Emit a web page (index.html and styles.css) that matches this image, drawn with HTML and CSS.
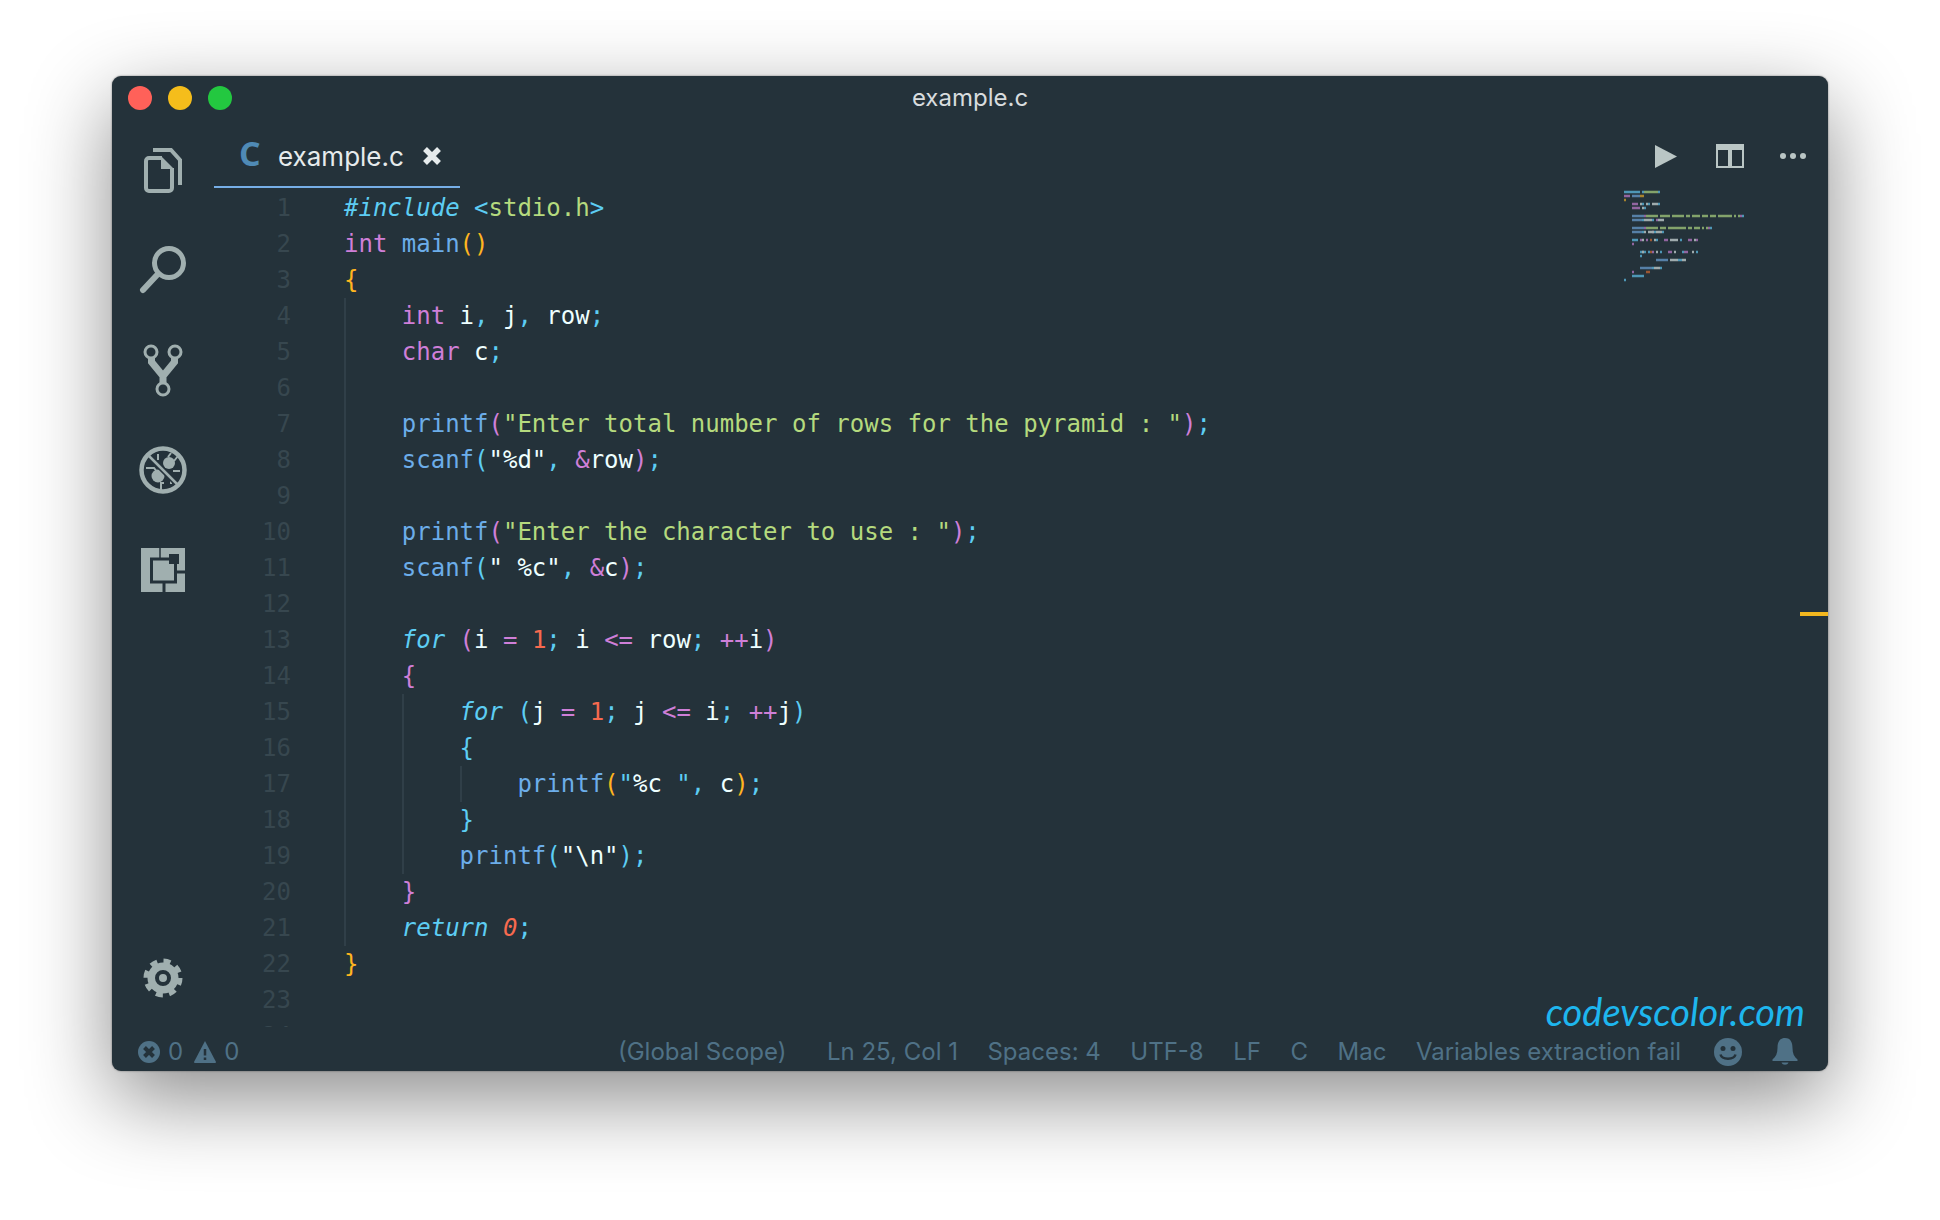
FILE: index.html
```html
<!DOCTYPE html>
<html lang="en">
<head>
<meta charset="utf-8">
<title>example.c</title>
<link rel="stylesheet" href="styles.css">
</head>
<body>
<div class="window">
  <header class="titlebar">
    <div class="lights"><i class="light red"></i><i class="light yellow"></i><i class="light green"></i></div>
    <div class="title">example.c</div>
  </header>
  <div class="main">
    <nav class="activity">
      <div class="slot">
        <svg width="38" height="46" viewBox="0 0 38 46" class="ico">
          <path class="st" stroke-width="4" d="M18 11H5a3 3 0 0 0-3 3V41a3 3 0 0 0 3 3H25a3 3 0 0 0 3-3V21"/>
          <path class="fl" d="M17 9L30 22H17z"/>
          <path class="st" stroke-width="4" d="M9 3H27L36 13V38"/>
        </svg>
      </div>
      <div class="slot">
        <svg width="48" height="48" viewBox="0 0 48 48" class="ico">
          <circle class="st" cx="30" cy="17" r="14.500" stroke-width="5"/>
          <path class="st" stroke-width="6" stroke-linecap="round" d="M18 29L4 44"/>
        </svg>
      </div>
      <div class="slot">
        <svg width="40" height="54" viewBox="0 0 40 54" class="ico">
          <path class="st" stroke-width="7" d="M8.500 14V19L20 33V42M31.500 14V19L20 33"/>
          <circle class="ring" cx="8" cy="9" r="6" stroke-width="3"/>
          <circle class="ring" cx="32" cy="9" r="6" stroke-width="3"/>
          <circle class="ring" cx="20" cy="46" r="6" stroke-width="3"/>
        </svg>
      </div>
      <div class="slot">
        <svg width="48" height="48" viewBox="0 0 48 48" class="ico">
          <circle class="fl" cx="19" cy="30" r="6.500"/>
          <circle class="fl" cx="30" cy="17" r="6"/>
          <path class="st" stroke-width="2" d="M19 8V14M32 7L29 11M39 10L35 15M41 25H34M7 22H15L19 27M22 44V37H25M32 30V38"/>
          <path class="dk" stroke-width="6" d="M9 9L39 39"/>
          <path class="st" stroke-width="2.500" d="M9 9L39 39"/>
          <circle class="st" cx="24" cy="24" r="21.500" stroke-width="4.500"/>
        </svg>
      </div>
      <div class="slot">
        <svg width="44" height="44" viewBox="0 0 44 44" class="ico">
          <rect class="fl" width="44" height="44"/>
          <rect class="dk" x="10.500" y="11" width="24" height="23" stroke-width="3" fill="none"/>
          <rect class="bgf" x="28" y="6" width="10" height="10"/>
          <path class="dk" stroke-width="3" d="M34 24H44M23 34V44"/>
          <path class="dk" stroke-width="1.500" d="M19 0V11"/>
        </svg>
      </div>
      <div class="slot gear">
        <svg width="40" height="40" viewBox="0 0 40 40" class="ico">
          <circle class="st" cx="20" cy="20" r="17" stroke-width="5" stroke-dasharray="7 6.350"/>
          <circle class="fl" cx="20" cy="20" r="15.500"/>
          <circle class="fl ringd" cx="20" cy="20" r="6"/>
        </svg>
      </div>
    </nav>
    <div class="workspace">
      <div class="tabbar">
        <div class="tab">
          <span class="tab-c">C</span>
          <span class="tab-name">example.c</span>
          <svg class="tab-x" width="20" height="20" viewBox="0 0 20 20"><path d="M3 3L17 17M17 3L3 17"/></svg>
        </div>
        <div class="actions">
          <svg width="24" height="24" viewBox="0 0 24 24" class="act"><path d="M1 1L23 12.500L1 24z"/></svg>
          <svg width="28" height="24" viewBox="0 0 28 24" class="act"><path fill-rule="evenodd" d="M0 0H28V24H0zM2 6V22H12V6zM16 6V22H26V6z"/></svg>
          <svg width="26" height="6" viewBox="0 0 26 6" class="act dots"><circle cx="3" cy="3" r="3"/><circle cx="13" cy="3" r="3"/><circle cx="23" cy="3" r="3"/></svg>
        </div>
      </div>
      <div class="editor">
        <div class="code">
          <div class="row"><span class="num">1</span><span class="txt"><span class="c i">#include</span> <span class="c">&lt;</span><span class="g">stdio.h</span><span class="c">&gt;</span></span></div>
          <div class="row"><span class="num">2</span><span class="txt"><span class="p">int</span> <span class="b">main</span><span class="y">()</span></span></div>
          <div class="row"><span class="num">3</span><span class="txt"><span class="y">{</span></span></div>
          <div class="row"><span class="num">4</span><span class="txt"><span class="ind"></span><span class="p">int</span> i<span class="c">,</span> j<span class="c">,</span> row<span class="c">;</span></span></div>
          <div class="row"><span class="num">5</span><span class="txt"><span class="ind"></span><span class="p">char</span> c<span class="c">;</span></span></div>
          <div class="row"><span class="num">6</span><span class="txt"><span class="ind"></span></span></div>
          <div class="row"><span class="num">7</span><span class="txt"><span class="ind"></span><span class="b">printf</span><span class="p">(</span><span class="g">"Enter total number of rows for the pyramid : "</span><span class="p">)</span><span class="c">;</span></span></div>
          <div class="row"><span class="num">8</span><span class="txt"><span class="ind"></span><span class="b">scanf</span><span class="c">(</span>"%d"<span class="c">,</span> <span class="p">&amp;</span>row<span class="p">)</span><span class="c">;</span></span></div>
          <div class="row"><span class="num">9</span><span class="txt"><span class="ind"></span></span></div>
          <div class="row"><span class="num">10</span><span class="txt"><span class="ind"></span><span class="b">printf</span><span class="p">(</span><span class="g">"Enter the character to use : "</span><span class="p">)</span><span class="c">;</span></span></div>
          <div class="row"><span class="num">11</span><span class="txt"><span class="ind"></span><span class="b">scanf</span><span class="c">(</span>" %c"<span class="c">,</span> <span class="p">&amp;</span>c<span class="p">)</span><span class="c">;</span></span></div>
          <div class="row"><span class="num">12</span><span class="txt"><span class="ind"></span></span></div>
          <div class="row"><span class="num">13</span><span class="txt"><span class="ind"></span><span class="c i">for</span> <span class="p">(</span>i <span class="p">=</span> <span class="o">1</span><span class="c">;</span> i <span class="p">&lt;=</span> row<span class="c">;</span> <span class="p">++</span>i<span class="p">)</span></span></div>
          <div class="row"><span class="num">14</span><span class="txt"><span class="ind"></span><span class="p">{</span></span></div>
          <div class="row"><span class="num">15</span><span class="txt"><span class="ind"></span><span class="ind"></span><span class="c i">for</span> <span class="c">(</span>j <span class="p">=</span> <span class="o">1</span><span class="c">;</span> j <span class="p">&lt;=</span> i<span class="c">;</span> <span class="p">++</span>j<span class="c">)</span></span></div>
          <div class="row"><span class="num">16</span><span class="txt"><span class="ind"></span><span class="ind"></span><span class="c">{</span></span></div>
          <div class="row"><span class="num">17</span><span class="txt"><span class="ind"></span><span class="ind"></span><span class="ind"></span><span class="b">printf</span><span class="y">(</span><span class="c">"</span>%c <span class="c">"</span><span class="c">,</span> c<span class="y">)</span><span class="c">;</span></span></div>
          <div class="row"><span class="num">18</span><span class="txt"><span class="ind"></span><span class="ind"></span><span class="c">}</span></span></div>
          <div class="row"><span class="num">19</span><span class="txt"><span class="ind"></span><span class="ind"></span><span class="b">printf</span><span class="c">(</span>"\n"<span class="c">)</span><span class="c">;</span></span></div>
          <div class="row"><span class="num">20</span><span class="txt"><span class="ind"></span><span class="p">}</span></span></div>
          <div class="row"><span class="num">21</span><span class="txt"><span class="ind"></span><span class="c i">return</span> <span class="o i">0</span><span class="c">;</span></span></div>
          <div class="row"><span class="num">22</span><span class="txt"><span class="y">}</span></span></div>
          <div class="row"><span class="num">23</span><span class="txt"></span></div>
          <div class="row"><span class="num">24</span><span class="txt"></span></div>
        </div>
        <svg class="minimap" width="130" height="92" viewBox="0 0 130 92" fill="none" stroke-width="2.500">
          <path stroke="#5fbfe6" d="M0 2h16M18 2h2M34 2h2M18 14h2M24 14h2M34 14h2M20 18h2M118 26h2M18 30h2M28 30h2M86 38h2M18 42h2M30 42h2M38 42h2M8 50h6M32 50h2M56 50h2M16 62h6M24 62h2M36 62h2M58 62h2M72 62h2M16 66h2M54 70h4M28 78h2M36 78h2M8 86h12M0 90h2"/>
          <path stroke="#6a9fd2" d="M8 26h12M8 30h10M8 38h12M8 42h10M32 70h12M16 78h12M8 6h8"/>
          <path stroke="#bb79c8" d="M0 6h6M8 14h6M8 18h8M20 26h2M116 26h2M32 30h2M20 38h2M84 38h2M28 42h2M16 50h2M22 50h2M40 50h4M64 50h4M72 50h2M8 54h2M28 62h2M44 62h4M60 62h4M8 82h2"/>
          <path stroke="#a8cf7e" d="M20 2h14M22 26h12M36 26h10M48 26h12M62 26h4M68 26h8M78 26h6M86 26h6M94 26h14M110 26h2M114 26h2M22 38h12M36 38h6M44 38h18M64 38h4M70 38h6M78 38h2M82 38h2"/>
          <path stroke="#cfdada" d="M16 14h2M22 14h2M28 14h6M18 18h2M20 30h8M34 30h6M20 42h2M24 42h6M32 42h6M18 50h2M30 50h2M46 50h8M70 50h2M18 62h2M32 62h2M50 62h2M68 62h2M46 70h8M58 70h4M30 78h6"/>
          <path stroke="#d9a32a" d="M16 6h4M0 10h2"/>
          <path stroke="#c9662f" d="M26 50h2M26 62h2M22 82h4"/>
        </svg>
        <div class="ruler-mark"></div>
      </div>
    </div>
  </div>
  <footer class="status">
    <div class="status-left">
      <svg width="22" height="22" viewBox="0 0 22 22" class="sico"><circle cx="11" cy="11" r="11"/><path class="sx" d="M6.500 6.500L15.500 15.500M15.500 6.500L6.500 15.500"/></svg>
      <span class="cnt">0</span>
      <svg width="22" height="22" viewBox="0 0 22 22" class="sico warn"><path d="M11 0L22 21a1 1 0 0 1-1 1H1a1 1 0 0 1-1-1z"/><path class="sx thin" d="M11 8V14.500M11 16.500V19"/></svg>
      <span class="cnt">0</span>
    </div>
    <div class="status-right">
      <span class="scope">(Global Scope)</span>
      <span>Ln 25, Col 1</span>
      <span>Spaces: 4</span>
      <span>UTF-8</span>
      <span>LF</span>
      <span>C</span>
      <span>Mac</span>
      <span class="note">Variables extraction fail</span>
      <svg width="28" height="28" viewBox="0 0 28 28" class="sico smile"><circle cx="14" cy="14" r="14"/><circle class="eye" cx="9" cy="10.500" r="2.500"/><circle class="eye" cx="19" cy="10.500" r="2.500"/><path class="sx thin" d="M6.500 16.500C8 22 20 22 21.500 16.500"/></svg>
      <svg width="26" height="27" viewBox="0 0 26 27" class="sico"><path d="M13 0C19 0 20.500 5 20.500 10C20.500 15 22 19 25.500 21.500V23H0.500V21.500C4 19 5.500 15 5.500 10C5.500 5 7 0 13 0z"/><path d="M9.500 24.500H16.500C15.500 27.500 10.500 27.500 9.500 24.500z"/></svg>
    </div>
  </footer>
  <div class="watermark">codevscolor.com</div>
</div>
</body>
</html>
```
FILE: styles.css
```css
* { box-sizing: border-box; }
html, body { margin: 0; height: 1220px; background: #fff; overflow: hidden; }
body { padding-top: 76px; }

.window {
  position: relative;
  width: 1716px;
  height: 995px;
  margin: 0 auto;
  display: flex;
  flex-direction: column;
  background: #24323a;
  border-radius: 9px;
  color: #eeffff;
  box-shadow: 0 28px 84px rgba(0,0,0,.46), 0 0 2px rgba(0,0,0,.5);
}

.titlebar { position: relative; height: 44px; padding-bottom: 2px; display: flex; align-items: center; justify-content: center; flex: none; }
.lights { position: absolute; left: 16px; top: 10px; display: flex; gap: 16px; }
.light { width: 24px; height: 24px; border-radius: 50%; display: block; }
.red { background: #ff6159; }
.yellow { background: #f5bd1b; }
.green { background: #23c840; }
.title { font: 24px "Inter", sans-serif; color: #d8dcde; }

.main { flex: 1; display: flex; min-height: 0; }

.activity { width: 102px; flex: none; display: flex; flex-direction: column; }
.slot { height: 100px; display: flex; align-items: center; justify-content: center; flex: none; }
.gear { margin-top: auto; height: 40px; margin-bottom: 29px; }
.ico { display: block; }
.st { fill: none; stroke: #a0afaf; }
.fl { fill: #a0afaf; }
.ring { fill: #24323a; stroke: #a0afaf; }
.dk { stroke: #24323a; }
.bgf { fill: #24323a; }
.ringd { stroke: #24323a; stroke-width: 4; }

.workspace { flex: 1; display: flex; flex-direction: column; min-width: 0; }
.tabbar { height: 70px; display: flex; flex: none; align-items: flex-start; justify-content: space-between; }
.tab { width: 246px; height: 68px; border-bottom: 2px solid #76aee6; display: flex; align-items: center; padding: 6px 0 0 25px; }
.tab-c { font: 700 34px "Open Sans", sans-serif; color: #4f8ab5; width: 39px; line-height: 1; position: relative; top: -3px; }
.tab-name { font: 26px "Inter", sans-serif; color: #e6ebec; }
.tab-x { margin-left: 18px; }
.tab-x path { stroke: #e6ebec; stroke-width: 5.500; fill: none; }
.actions { display: flex; align-items: center; gap: 38px; padding: 24px 22px 0 0; }
.act { display: block; fill: #bac6c5; }
.dots { margin-left: -2px; }

.editor { position: relative; height: 837px; overflow: hidden; }
.row { display: flex; height: 36px; font: 24px/36px "DejaVu Sans Mono", monospace; white-space: pre; color: #eeffff; }
.num { width: 77px; flex: none; text-align: right; color: #37474f; }
.txt { margin-left: 53px; display: block; }
.ind { display: inline-block; width: 57.8px; height: 36px; vertical-align: top; box-shadow: inset 2px 0 0 #303f48; }
.c { color: #5dcdf3; }
.i { font-style: italic; }
.g { color: #b5da7e; }
.p { color: #cf7fd8; }
.b { color: #6cade9; }
.y { color: #ffb51f; }
.o { color: #f76a4f; }

.minimap { position: absolute; left: 1410px; top: 0; opacity: .72; }
.ruler-mark { position: absolute; right: 0; top: 422px; width: 28px; height: 4px; background: #f2b71f; }

.status { height: 44px; flex: none; display: flex; align-items: center; justify-content: space-between; padding: 5px 30px 0 26px; font: 24px "Inter", sans-serif; color: #4f7186; }
.status-left { display: flex; align-items: center; }
.status-left .cnt { margin: 0 11px 0 8px; }
.status-right { display: flex; align-items: center; gap: 29.5px; }
.scope { margin-right: 11px; }
.note { margin-right: 3px; }
.smile { margin-right: 1px; }
.sico { display: block; fill: #4f7186; }
.sx { stroke: #24323a; stroke-width: 4; fill: none; }
.thin { stroke-width: 2.500; }
.eye { fill: #24323a; }

.watermark { position: absolute; right: 23px; top: 912px; font: italic 38px "Lato", cursive; color: #1eb6ee; }
```
